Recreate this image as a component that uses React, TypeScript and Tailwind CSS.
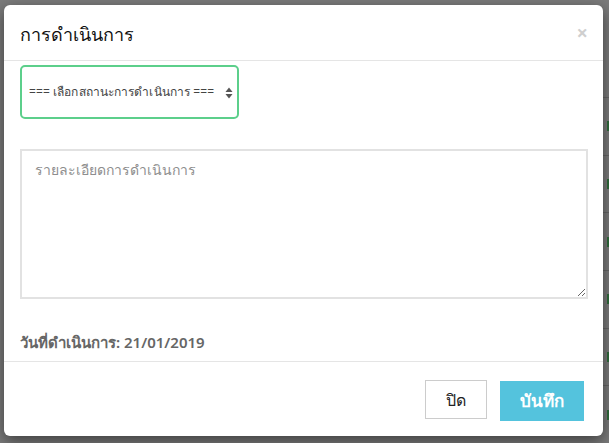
import React from "react";

export default function App() {
  const font = { fontFamily: '"Noto Sans", "Liberation Sans", sans-serif' };
  const rows = [0, 1, 2, 3, 4, 5];
  return (
    <div className="relative w-[609px] h-[443px] overflow-hidden bg-[#7b7b7b]" style={font}>
      {/* page behind (dimmed) */}
      <div className="flex flex-col pt-[97px] pl-[596px] h-full">
        {rows.map((r) => (
          <div key={r} className="h-[61px] border-t border-[#666] flex items-center justify-end">
            <div className="w-[2px] h-[10px] bg-[#2f6b3a]" />
          </div>
        ))}
      </div>

      {/* modal */}
      <div className="absolute left-[4px] top-[5px] w-[599px] h-[431px] bg-white rounded-[6px] shadow-[0_5px_15px_rgba(0,0,0,0.5)] flex flex-col">
        <div className="h-[56px] border-b border-[#e5e5e5] flex items-center justify-between pl-[16px] pr-[15px] shrink-0">
          <div className="text-[18px] text-[#111] leading-none pt-[2px]">การดำเนินการ</div>
          <div className="text-[20px] leading-none text-[#cfcfcf] font-bold">×</div>
        </div>

        <div className="flex-1 flex flex-col pl-[16px] pr-[15px] pt-[4px]">
          <div className="w-[219px] h-[54px] border-2 border-[#5ccf8b] rounded-[5px] flex items-center justify-between pl-[7px] pr-[4px]">
            <span className="text-[12px] tracking-[0.1px] text-[#444] whitespace-nowrap">=== เลือกสถานะการดำเนินการ ===</span>
            <svg width="8" height="12" viewBox="0 0 8 12" className="mt-[1px] shrink-0">
              <path d="M4 0.5 L7.5 5 L0.5 5 Z" fill="#555" />
              <path d="M4 11.5 L7.5 7 L0.5 7 Z" fill="#555" />
            </svg>
          </div>

          <textarea
            readOnly
            placeholder="รายละเอียดการดำเนินการ"
            className="mt-[30px] w-[568px] h-[150px] border-2 border-[#e2e2e2] px-[13px] py-[8px] text-[14px] text-[#555] placeholder:text-[#8e8e8e] outline-none"
          />

          <div className="mt-[32px] text-[15px] font-semibold text-[#666]">วันที่ดำเนินการ: 21/01/2019</div>
        </div>

        <div className="h-[75px] border-t border-[#e5e5e5] flex items-center justify-end gap-[13px] pr-[19px] shrink-0">
          <button className="w-[62px] h-[39px] border border-[#cccccc] bg-white text-[16px] text-[#222] mt-[1px]">ปิด</button>
          <button className="w-[84px] h-[40px] bg-[#54c3dd] text-white text-[17px] font-semibold mt-[3px]">บันทึก</button>
        </div>
      </div>
    </div>
  );
}
